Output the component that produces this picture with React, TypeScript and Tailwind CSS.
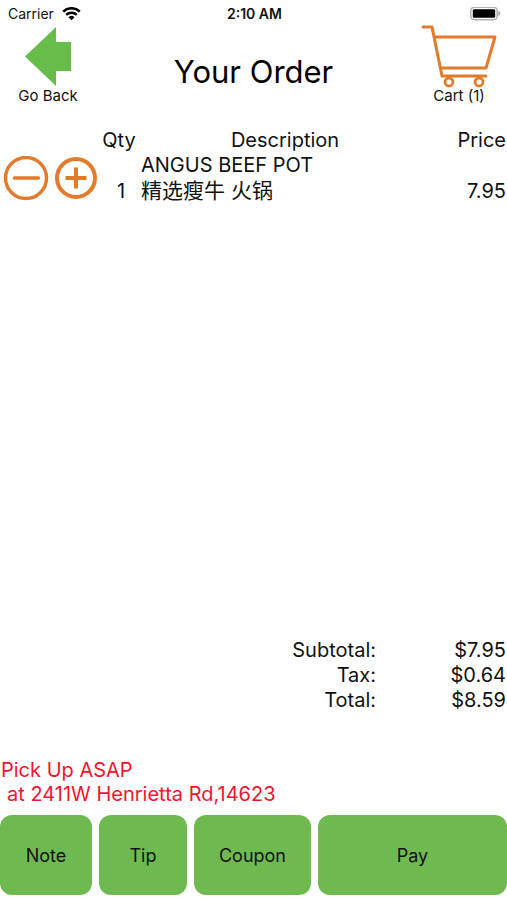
import React from "react";

const actions = ["Note", "Tip", "Coupon", "Pay"];

const totals = [
  { label: "Subtotal:", value: "$7.95" },
  { label: "Tax:", value: "$0.64" },
  { label: "Total:", value: "$8.59" },
];

function StatusBar() {
  return (
    <div className="grid h-7 grid-cols-3 items-center pl-2 pr-1.5 text-sm leading-4">
      <div className="flex items-center gap-2">
        <span>Carrier</span>
        <svg width="19" height="14" viewBox="0 0 19 14" fill="none" aria-hidden="true">
          <path d="M1.2 4.6a12 12 0 0 1 16.6 0" stroke="#000" strokeWidth="2.6" />
          <path d="M4.2 7.9a7.7 7.7 0 0 1 10.6 0" stroke="#000" strokeWidth="2.4" />
          <path d="M9.5 13.3 6.5 10.3a4.3 4.3 0 0 1 6 0z" fill="#000" />
        </svg>
      </div>
      <span className="text-center font-semibold">2:10 AM</span>
      <svg className="justify-self-end" width="31" height="14" viewBox="0 0 31 14" aria-hidden="true">
        <rect x="0.8" y="0.3" width="26.4" height="12.4" rx="3.5" fill="#fff" stroke="#b0b0b0" strokeWidth="1.5" />
        <rect x="2.8" y="2.2" width="22.4" height="8.6" rx="1.4" fill="#000" />
        <path d="M28.4 4c2.4 1 2.4 4 0 5z" fill="#a0a0a0" />
      </svg>
    </div>
  );
}

function Header() {
  return (
    <header className="grid grid-cols-[96px_1fr_96px] items-center">
      <button type="button" className="flex flex-col items-center text-[15px] leading-4">
        <svg className="overflow-visible" width="48" height="60" viewBox="0 0 48 60" aria-hidden="true">
          <path d="M1 28.5 32 -1V14h15v29H32v15z" fill="#68bd4a" />
        </svg>
        <span>Go Back</span>
      </button>
      <h1 className="pt-3 text-center text-[31px] leading-10 text-black">Your Order</h1>
      <button type="button" className="flex flex-col items-center text-[15px] leading-4">
        <svg className="overflow-visible" width="76" height="60" viewBox="0 0 76 60" fill="none" stroke="#e27b2c" aria-hidden="true">
          <path d="M2 -1h9l10 49h44" strokeWidth="3" strokeLinejoin="round" strokeLinecap="round" />
          <path d="M13 9h61l-9 31H20" strokeWidth="3" strokeLinejoin="round" />
          <circle cx="28" cy="54" r="4" strokeWidth="2.8" />
          <circle cx="58" cy="54" r="4" strokeWidth="2.8" />
        </svg>
        <span>Cart (1)</span>
      </button>
    </header>
  );
}

function OrderTable() {
  return (
    <table className="mt-6 w-full table-fixed text-xl leading-[25px]">
      <colgroup>
        <col className="w-[102px]" />
        <col className="w-[34px]" />
        <col />
        <col className="w-[76px]" />
      </colgroup>
      <thead>
        <tr>
          <td />
          <th className="font-normal">Qty</th>
          <th className="pl-1 font-normal">Description</th>
          <th className="text-right font-normal">Price</th>
        </tr>
      </thead>
      <tbody>
        <tr>
          <td className="pl-[3px]">
            <div className="flex items-center gap-1.5">
              <button type="button" aria-label="Decrease quantity">
                <svg width="46" height="46" viewBox="0 0 46 46" fill="none" stroke="#e27b2c" strokeLinecap="round">
                  <circle cx="23" cy="22" r="20.5" strokeWidth="3.4" />
                  <path d="M11.500 22h24" strokeWidth="3.4" />
                </svg>
              </button>
              <button type="button" aria-label="Increase quantity">
                <svg width="43" height="43" viewBox="0 0 43 43" fill="none" stroke="#e27b2c">
                  <circle cx="21" cy="21" r="19" strokeWidth="4" />
                  <path d="M10.500 21h21M21 10.500v21" strokeWidth="4" />
                </svg>
              </button>
            </div>
          </td>
          <td className="pl-1 text-center align-bottom">1</td>
          <td className="pl-[5px] align-bottom">
            ANGUS BEEF POT
            <br />
            <span className="text-[21px]">精选瘦牛 火锅</span>
          </td>
          <td className="text-right align-bottom">7.95</td>
        </tr>
      </tbody>
    </table>
  );
}

export default function App() {
  return (
    <main className="flex min-h-screen flex-col bg-white font-['Inter','Noto_Sans_CJK_SC',sans-serif] text-[#111111]">
      <StatusBar />
      <Header />
      <div className="flex-1 pr-px">
        <OrderTable />
      </div>
      <dl className="grid grid-cols-[1fr_130px] pr-px text-right text-xl leading-[25px]">
        {totals.map((row) => (
          <React.Fragment key={row.label}>
            <dt>{row.label}</dt>
            <dd>{row.value}</dd>
          </React.Fragment>
        ))}
      </dl>
      <p className="mt-[45px] pl-px text-xl leading-6 text-[#f5132d]">
        Pick Up ASAP
        <br />
        <span className="pl-1.5">at 2411W Henrietta Rd,14623</span>
      </p>
      <nav className="mt-[9px] mb-[5px] grid h-20 grid-cols-[92fr_88fr_117fr_189fr] gap-[7px] text-lg">
        {actions.map((label) => (
          <button key={label} type="button" className="rounded-xl bg-[#6fba50] pt-0.5">
            {label}
          </button>
        ))}
      </nav>
    </main>
  );
}
